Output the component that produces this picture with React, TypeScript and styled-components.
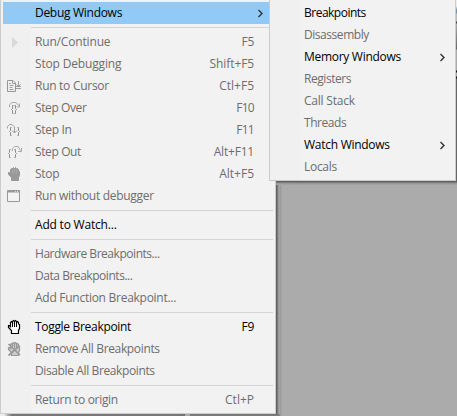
import React from "react";
import styled, { createGlobalStyle } from "styled-components";

const GlobalStyle = createGlobalStyle`
  * { box-sizing: border-box; }
  html, body { margin: 0; padding: 0; overflow: hidden; background: #ababab; }
`;

const Desktop = styled.main`
  position: relative;
  width: 457px;
  height: 416px;
  overflow: hidden;
  background: #ababab;
  font-family: "Open Sans", "Noto Sans", sans-serif;
  font-size: 12px;
`;

const EdgeStrip = styled.div`
  position: absolute;
  top: 0;
  right: 0;
  width: 1px;
  height: 181px;
  background: linear-gradient(#eee 0 6px, #7595a5 10px 13px, #bbb 14px 21px, #444 22px 23px, #aaa 24px, #666 49px, #aaa 50px 70px, #111 71px 72px, #aaa 73px 76px, #111 77px 78px, #666 79px);
`;

const BottomStrip = styled.div`
  position: absolute;
  left: 0;
  bottom: 0;
  width: 190px;
  height: 2px;
  background: linear-gradient(90deg, #eee 0 4px, #aaa 8px, #777 12px 183px, #68747c 183px 185px, #aaa 185px);
`;

const Menu = styled.div`
  position: absolute;
  display: flex;
  flex-direction: column;
  padding: 2px;
  background: linear-gradient(90deg, #f0f0f0 30px, #f2f2f2 30px);
  border: 1px solid #ccc;
`;

const MainMenu = styled(Menu)`
  left: 0;
  top: -1px;
  width: 276px;
  height: 415px;
  box-shadow: 1px 0 #606060, 2px 0 #7b7b7b, 3px 0 #979797, 4px 0 #a4a4a4, 4px 3px 2px #777;
`;

const SubMenu = styled(Menu)`
  left: 269px;
  top: -1px;
  width: 187px;
  height: 182px;
`;

const SubMenuShadow = styled.div`
  position: absolute;
  left: 276px;
  right: 0;
  top: 181px;
  height: 4px;
  background: linear-gradient(#606060 0 1px, #7b7b7b 1px 2px, #979797 2px 3px, #a4a4a4 3px);
`;

const Row = styled.div<{ $enabled?: boolean; $active?: boolean }>`
  flex: none;
  display: grid;
  grid-template-columns: 28px 1fr auto;
  align-items: center;
  height: 22px;
  padding-right: 19px;
  line-height: 22px;
  white-space: pre;
  color: ${(p) => (p.$enabled ? "#000" : "#6d6d6d")};
  background: ${(p) => (p.$active ? "#91c9f7" : "transparent")};
`;

const IconCell = styled.span`
  display: flex;
  height: 22px;
  padding: 3px 0 0 3px;
`;

const Label = styled.span<{ $track: number }>`
  padding-left: 4px;
  letter-spacing: ${(p) => p.$track}px;
`;

const Shortcut = styled.span<{ $track: number }>`
  letter-spacing: ${(p) => p.$track}px;
`;

const Separator = styled.div`
  flex: none;
  height: 1px;
  margin: 3px 0 3px 28px;
  background: #d4d4d4;
`;

const Arrow = styled.svg`
  display: block;
  width: 6px;
  height: 9px;
`;

const ArrowSlot = styled.span<{ $shift: number }>`
  justify-self: end;
  margin-right: ${(p) => p.$shift}px;
`;

const Glyph = styled.svg`
  display: block;
  flex: none;
  width: 16px;
  height: 16px;
  fill: none;
  overflow: visible;
`;

const HAND =
  "M5.5 12.5V11.5L2.5 8.5V6.5H3.5L4.5 7.5V3.5L5.5 2.5L6.5 3.5V2.5L7.5 1.5L8.5 2.5L9.5 1.5L10.5 2.5V3.5L11.5 2.5L12.5 3.5V5L13.5 5.5V9.5L12.5 11.5V14.5H5.5Z";

const icons: Record<string, React.ReactNode> = {
  run: <path d="M6 3v11l6-5.5z" fill="#d9d9d9" />,
  cursor: (
    <g stroke="#969696">
      <path d="M1.5 2.5H7L9.5 5V13.5H1.5Z" />
      <path d="M6.5 2.5V5.5H9.5M3 5.5h2M3.5 7.5h4M3.5 9.5h3M3.5 11.5h4M12.5 3v6M10.5 6.5l2 2 2-2M10 8.5h5M10 10.5h5" strokeWidth=".9" />
    </g>
  ),
  over: (
    <g stroke="#8c8c8c">
      <path d="M3.5 7V5L5.5 2.5H10L13 6M13.5 3.5v3.5H10.5" stroke="#aaa" />
      <path d="M7.5 5.5H6.5V8.5L5.5 9.5L6.5 10.5V13.5H7.5M8.5 5.5H9.5V8.5L10.5 9.5L9.5 10.5V13.5H8.5" />
    </g>
  ),
  in: (
    <g stroke="#8c8c8c">
      <path d="M1.5 6.5V4.5L3.5 2.5H6L8.5 5V11M6 8.5L8.5 11L11 8.5" stroke="#a0a0a0" />
      <path d="M5.5 5.5H4.5V8.5L3.5 9.5L4.5 10.5V13.5H5.5M11.5 5.5H12.5V8.5L13.5 9.5L12.5 10.5V13.5H11.5" />
    </g>
  ),
  out: (
    <g stroke="#8c8c8c">
      <path d="M6.5 7V4.5L8.5 2.5H12L14.5 6.5M15.5 4v3.5H12" stroke="#aaa" />
      <path d="M4.5 5.5H3.5V8.5L2.5 9.5L3.5 10.5V13.5H4.5M8.5 5.5H9.5V8.5L10.5 9.5L9.5 10.5V13.5H8.5" />
    </g>
  ),
  stop: (
    <g>
      <path d={HAND} fill="#999" stroke="#999" />
      <path d="M6.5 3.5v4M8.5 3v4M10.5 3.5v4" stroke="#b0b0b0" strokeWidth=".7" />
    </g>
  ),
  window: (
    <g>
      <path d="M1.5 2.5h12v11h-12z" fill="#f3f3f3" stroke="#999" />
      <path d="M1 3.5h13" stroke="#999" strokeWidth="2" />
      <path d="M9 3.5h1M11 3.5h1" stroke="#ddd" />
    </g>
  ),
  toggle: (
    <g stroke="#000">
      <path d={HAND} fill="#fff" strokeWidth="1.2" />
      <path d="M6.5 3v5M8.5 2v6M10.5 3v5" />
    </g>
  ),
  remove: (
    <g stroke="#999">
      <path d={HAND} fill="#ccc" strokeWidth="1.2" />
      <path d="M6.5 3v4M8.5 2v5M10.5 3v4" />
      <path d="M2.5 3l11.5 11M13.5 4.5L2.5 14.5" strokeWidth="1.7" />
    </g>
  ),
};

type Item = {
  label: string;
  keys?: string;
  icon?: string;
  enabled?: boolean;
  active?: boolean;
  arrow?: boolean;
  track?: number;
  keyTrack?: number;
};

const mainGroups: Item[][] = [
  [{ label: "Debug Windows", enabled: true, active: true, arrow: true, track: -0.29 }],
  [
    { label: "Run/Continue", keys: "F5", icon: "run", track: -0.17, keyTrack: -0.3 },
    { label: "Stop Debugging", keys: "Shift+F5", track: -0.16, keyTrack: -0.1 },
    { label: "Run to Cursor", keys: "Ctl+F5", icon: "cursor", track: -0.28 },
    { label: "Step Over", keys: "F10", icon: "over", track: -0.4, keyTrack: -0.7 },
    { label: "Step In", keys: "F11", icon: "in", track: -0.32, keyTrack: -0.7 },
    { label: "Step Out", keys: "Alt+F11", icon: "out", track: -0.38, keyTrack: -0.2 },
    { label: "Stop", keys: "Alt+F5", icon: "stop", track: -0.25 },
    { label: "Run without debugger", icon: "window", track: -0.29 },
  ],
  [{ label: "Add to Watch...", enabled: true, track: -0.2 }],
  [
    { label: "Hardware Breakpoints...", track: -0.46 },
    { label: "Data Breakpoints...", track: -0.46 },
    { label: "Add Function Breakpoint...", track: -0.27 },
  ],
  [
    { label: "Toggle Breakpoint", keys: "F9", icon: "toggle", enabled: true, track: -0.31, keyTrack: -0.3 },
    { label: "Remove All Breakpoints", icon: "remove", track: -0.35 },
    { label: "Disable All Breakpoints", track: -0.38 },
  ],
  [{ label: "Return to origin", keys: "Ctl+P", track: -0.31 }],
];

const windowItems: Item[] = [
  { label: "Breakpoints", enabled: true, track: -0.5 },
  { label: "Disassembly", track: -0.45 },
  { label: "Memory Windows", enabled: true, arrow: true, track: -0.29 },
  { label: "Registers", track: -0.45 },
  { label: "Call Stack", track: -0.22 },
  { label: "Threads", track: -0.45 },
  { label: "Watch Windows", enabled: true, arrow: true, track: -0.27 },
  { label: "Locals", track: -0.3 },
];

function MenuRow({ item, arrowShift }: { item: Item; arrowShift: number }) {
  return (
    <Row $enabled={item.enabled} $active={item.active}>
      <IconCell>{item.icon && <Glyph viewBox="0 0 16 16">{icons[item.icon]}</Glyph>}</IconCell>
      <Label $track={item.track ?? 0}>{item.label}</Label>
      {item.keys && <Shortcut $track={item.keyTrack ?? 0}>{item.keys}</Shortcut>}
      {item.arrow && (
        <ArrowSlot $shift={arrowShift}>
          <Arrow viewBox="0 0 6 9">
            <path d="M1.5 1l3.5 3.5L1.5 8" fill="none" stroke="#333" strokeWidth="1.4" />
          </Arrow>
        </ArrowSlot>
      )}
    </Row>
  );
}

export default function App() {
  return (
    <>
      <GlobalStyle />
      <Desktop>
        <EdgeStrip />
        <MainMenu>
          {mainGroups.map((group, index) => (
            <React.Fragment key={index}>
              {index > 0 && <Separator />}
              {group.map((item) => (
                <MenuRow key={item.label} item={item} arrowShift={-9} />
              ))}
            </React.Fragment>
          ))}
        </MainMenu>
        <BottomStrip />
        <SubMenuShadow />
        <SubMenu>
          {windowItems.map((item) => (
            <MenuRow key={item.label} item={item} arrowShift={-11} />
          ))}
        </SubMenu>
      </Desktop>
    </>
  );
}
